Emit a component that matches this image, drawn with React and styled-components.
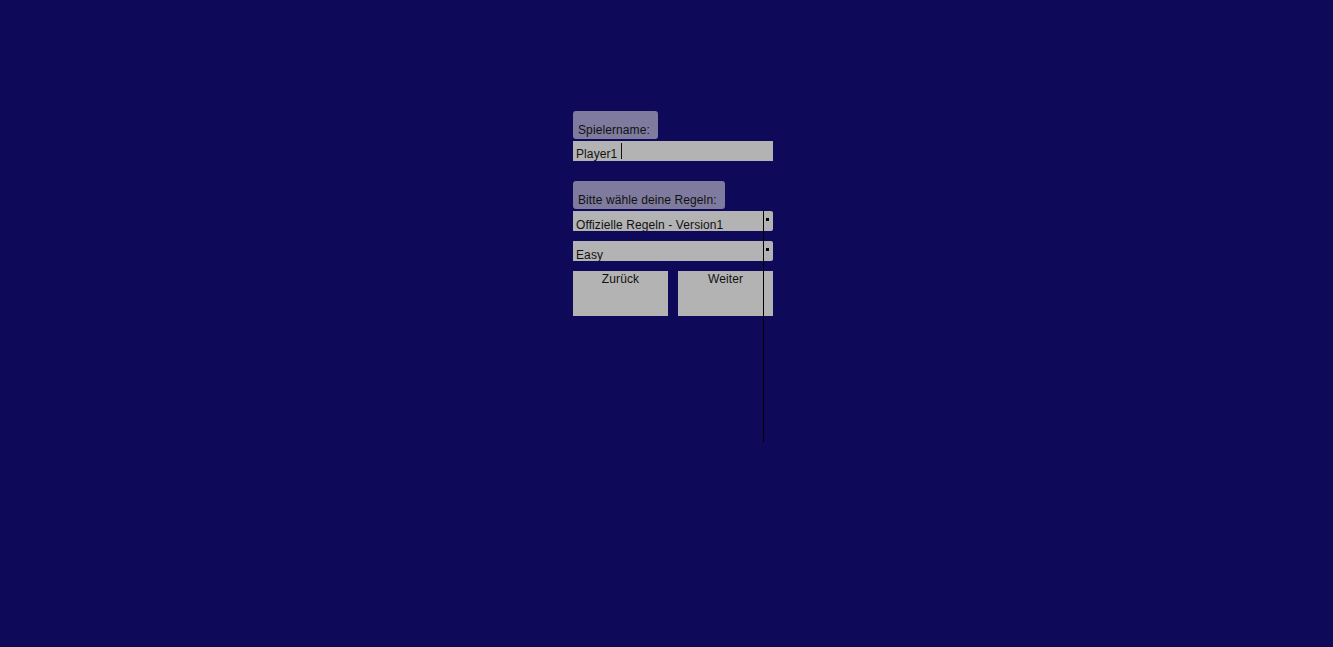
import React from "react";
import styled, { createGlobalStyle } from "styled-components";

const Global = createGlobalStyle`
  html, body {
    margin: 0;
    padding: 0;
    background: #0f095a;
    height: 100%;
  }
  body {
    font-family: "Liberation Sans", Arial, sans-serif;
    font-size: 12px;
    letter-spacing: 0.1px;
    color: #111;
  }
  #root { min-height: 100%; }
`;

const Page = styled.div`
  width: 1333px;
  height: 647px;
  background: #0f095a;
  padding: 111px 0 0 573px;
  box-sizing: border-box;
`;

const Form = styled.div`
  position: relative;
  width: 200px;
  display: flex;
  flex-direction: column;
  align-items: flex-start;
`;

const Label = styled.div`
  box-sizing: border-box;
  height: 28px;
  padding: 12px 8px 0 5px;
  line-height: 14px;
  background: #7f7b9e;
  border-radius: 3px;
  color: #111;
  white-space: nowrap;
  margin-top: ${(p) => p.$mt || 0}px;
`;

const TextField = styled.div`
  box-sizing: border-box;
  width: 200px;
  height: 20px;
  margin-top: 2px;
  padding: 7px 0 0 3px;
  line-height: 13px;
  background: #b3b3b3;
  display: flex;
  align-items: flex-start;
  white-space: nowrap;
`;

const Caret = styled.span`
  display: inline-block;
  width: 1px;
  height: 16px;
  margin-left: 4px;
  margin-top: -5px;
  background: #111;
`;

const Select = styled.div`
  position: relative;
  box-sizing: border-box;
  width: 200px;
  height: 20px;
  margin-top: ${(p) => p.$mt}px;
  padding: 8px 0 0 3px;
  line-height: 12px;
  background: #b3b3b3;
  border-radius: 0 2px 2px 0;
  white-space: nowrap;
  overflow: hidden;
`;

const Marker = styled.span`
  position: absolute;
  left: 193px;
  top: 7px;
  width: 3px;
  height: 3px;
  background: #000;
`;

const Buttons = styled.div`
  display: flex;
  gap: 10px;
  margin-top: 10px;
`;

const Button = styled.div`
  box-sizing: border-box;
  width: 95px;
  height: 45px;
  padding-top: 2px;
  line-height: 13px;
  text-align: center;
  background: #b3b3b3;
  color: #111;
`;

const ScrollLine = styled.div`
  position: absolute;
  left: 190px;
  top: 100px;
  width: 1px;
  height: 231px;
  background: #000;
`;

export default function App() {
  return (
    <>
      <Global />
      <Page>
        <Form>
          <Label>Spielername:</Label>
          <TextField>
            Player1
            <Caret />
          </TextField>
          <Label $mt={20}>Bitte wähle deine Regeln:</Label>
          <Select $mt={2}>
            Offizielle Regeln - Version1
            <Marker />
          </Select>
          <Select $mt={10}>
            Easy
            <Marker />
          </Select>
          <Buttons>
            <Button>Zurück</Button>
            <Button>Weiter</Button>
          </Buttons>
          <ScrollLine />
        </Form>
      </Page>
    </>
  );
}
